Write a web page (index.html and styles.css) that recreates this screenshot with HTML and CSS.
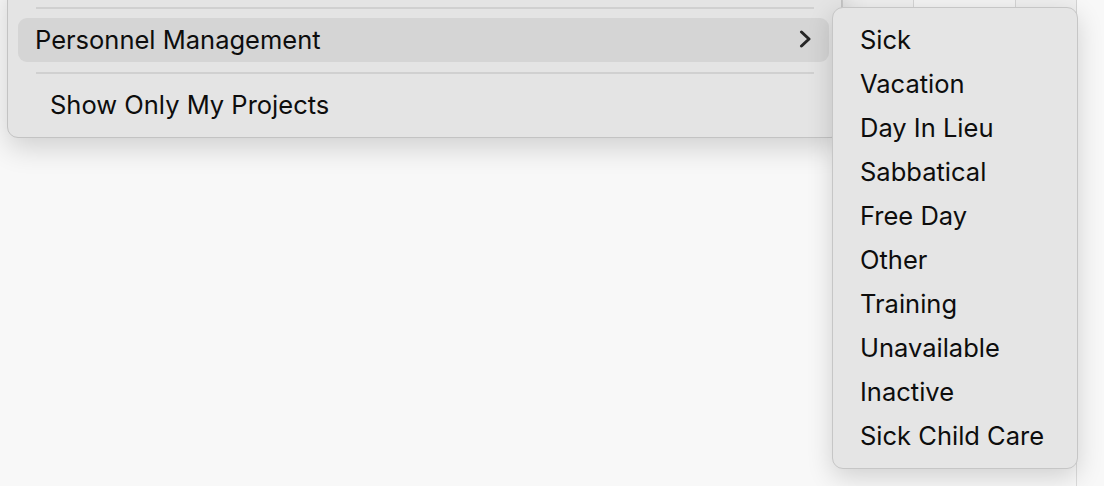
FILE: index.html
```html
<!DOCTYPE html>
<html lang="en">

<head>
  <meta charset="UTF-8" />
  <title>Context Menu</title>
  <link rel="stylesheet" href="styles.css">
</head>

<body>

  <div class="window">
    <!-- table header behind the menus -->
    <div class="header-row">
      <div class="cell cell-a"></div>
      <div class="cell cell-b"></div>
      <div class="cell cell-c"></div>
      <div class="cell cell-d"></div>
    </div>
    <div class="column-line"></div>

    <div class="menu">
      <div class="separator"></div>
      <div class="menu-item selected">
        <span>Personnel Management</span>
        <svg class="chevron" width="13" height="18" viewBox="0 0 13 18">
          <path d="M2.5 2 L10 9 L2.5 16" fill="none" stroke="#262626" stroke-width="3" stroke-linecap="round" stroke-linejoin="round" />
        </svg>
      </div>
      <div class="separator"></div>
      <div class="menu-item indented">
        <span>Show Only My Projects</span>
      </div>
    </div>

    <div class="submenu">
      <div class="menu-item">Sick</div>
      <div class="menu-item">Vacation</div>
      <div class="menu-item">Day In Lieu</div>
      <div class="menu-item">Sabbatical</div>
      <div class="menu-item">Free Day</div>
      <div class="menu-item">Other</div>
      <div class="menu-item">Training</div>
      <div class="menu-item">Unavailable</div>
      <div class="menu-item">Inactive</div>
      <div class="menu-item">Sick Child Care</div>
    </div>
  </div>

</body>

</html>
```

FILE: styles.css
```css
body {
  margin: 0;
  font-family: Inter, "Liberation Sans", sans-serif;
  background-color: #f8f8f8;
  color: #0d0d0d;
}

.window {
  position: relative;
  width: 1104px;
  height: 486px;
  overflow: hidden;
}

.header-row {
  display: flex;
  height: 22px;
  padding-left: 842px;
}

.cell {
  height: 100%;
  border-left: 1px solid #d4d4d4;
  background-color: #efefef;
}

.cell-a {
  width: 70px;
}

.cell-b {
  width: 101px;
  background-color: #f3f3f3;
}

.cell-c {
  width: 60px;
}

.cell-d {
  flex: 1;
  background-color: #f8f8f8;
}

.column-line {
  margin-left: 1076px;
  width: 1px;
  height: 464px;
  background-color: #dcdcdc;
}

/* main context menu */
.menu {
  position: absolute;
  left: 7px;
  top: -20px;
  width: 835px;
  padding: 16px 12px 10px 10px;
  background-color: #e4e4e4;
  border: 1px solid #c3c3c3;
  border-radius: 11px;
  box-shadow: 0 10px 28px rgba(0, 0, 0, 0.16);
  box-sizing: border-box;
}

.separator {
  height: 21px;
  position: relative;
}

.separator::after {
  content: "";
  position: absolute;
  left: 18px;
  right: 15px;
  top: 10px;
  height: 2px;
  background-color: #d0d0d0;
}

.menu-item {
  display: flex;
  align-items: center;
  justify-content: space-between;
  height: 44px;
  padding: 0 17px 2px 17px;
  font-size: 25.5px;
  border-radius: 9px;
  box-sizing: border-box;
}

.menu-item.selected {
  background-color: #d5d5d5;
}

.menu-item.indented {
  padding-left: 32px;
}

.chevron {
  display: block;
}

/* submenu */
.submenu {
  position: absolute;
  left: 832px;
  top: 7px;
  width: 246px;
  padding: 10px;
  background-color: #e5e5e5;
  border: 1px solid #c6c6c6;
  border-radius: 11px;
  box-shadow: 0 8px 26px rgba(0, 0, 0, 0.16);
  box-sizing: border-box;
}
```
